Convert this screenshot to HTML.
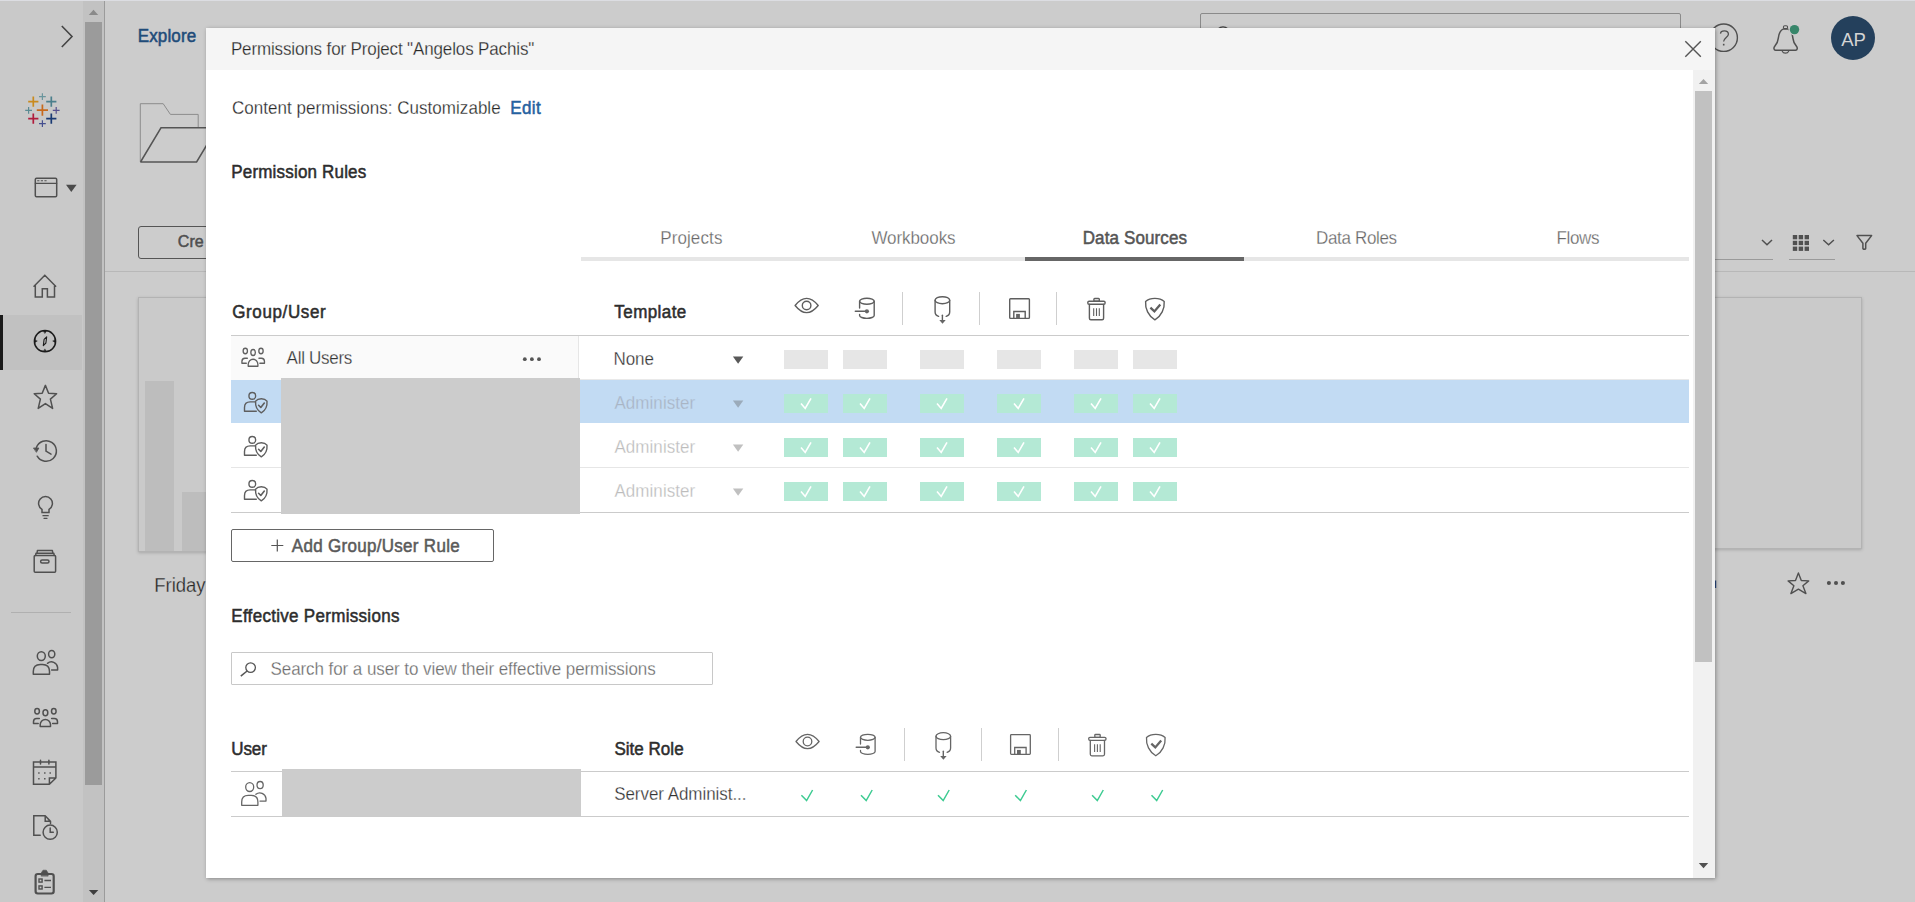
<!DOCTYPE html>
<html>
<head>
<meta charset="utf-8">
<title>Permissions</title>
<style>
*{box-sizing:border-box;margin:0;padding:0}
html,body{width:1915px;height:902px;overflow:hidden;background:#cccccc;font-family:"Liberation Sans",sans-serif;color:#333}
.abs{position:absolute}
.t{position:absolute;white-space:nowrap;line-height:1}
svg{position:absolute;left:0;top:0;overflow:visible}
#topstrip{left:0;top:0;width:1915px;height:1px;background:#dcdde2}
#side{left:0;top:1px;width:83px;height:901px;background:#c9c9c9}
#sidetrack{left:83px;top:1px;width:21px;height:901px;background:#c2c2c2}
#sideborder{left:104px;top:1px;width:1px;height:901px;background:#9b9b9b}
#sidethumb{left:85px;top:22px;width:17px;height:763px;background:#9b9b9b}
#dlg{left:206px;top:28px;width:1509px;height:850px;background:#fff;box-shadow:0.5px 1px 4px 0 rgba(0,0,0,.34);overflow:visible}
#dlgin{left:-206px;top:-28px;width:1915px;height:902px}
#dlghead{left:206px;top:28px;width:1509px;height:42px;background:#f5f5f5}
#dtrack{left:1693px;top:70px;width:22px;height:808px;background:#f1f1f1}
#dthumb{left:1695px;top:91px;width:17px;height:571px;background:#c1c1c1}
.hl{position:absolute;height:1px;background:#cbcbcb}
.box{position:absolute;width:44px;height:19px;background:#e6e6e6}
.gbox{position:absolute;width:44px;height:19px;background:#b4e9d5}
</style>
</head>
<body>
<div id="bg" class="abs" style="left:0;top:0;width:1915px;height:902px;overflow:hidden">
<div id="topstrip" class="abs"></div>
<div id="side" class="abs"></div>
<div id="sidetrack" class="abs"></div>
<div id="sideborder" class="abs"></div>
<div id="sidethumb" class="abs"></div>
<!-- selected nav item -->
<div class="abs" style="left:0;top:315px;width:82px;height:55px;background:#c1c1c1"></div>
<div class="abs" style="left:0;top:315px;width:3px;height:55px;background:#1a1a1a"></div>
<!-- sidebar divider -->
<div class="abs" style="left:11px;top:612px;width:60px;height:1px;background:#b0b0b0"></div>
<!-- search box top -->
<div class="abs" style="left:1200px;top:13px;width:481px;height:40px;border:1px solid #8a8a8a;border-radius:2px"></div>
<!-- create button -->
<div class="abs" style="left:138px;top:226px;width:200px;height:33px;border:1px solid #555;border-radius:3px"></div>
<!-- toolbar line -->
<div class="abs" style="left:105px;top:271px;width:1810px;height:1px;background:#b8b8b8"></div>
<!-- left card -->
<div class="abs" style="left:138px;top:297px;width:300px;height:255px;border:1px solid #b3b3b3;background:#cacaca;box-shadow:0 1px 3px rgba(0,0,0,.18)"></div>
<div class="abs" style="left:145px;top:381px;width:29px;height:170px;background:#bdbdbd"></div>
<div class="abs" style="left:182px;top:492px;width:29px;height:59px;background:#bdbdbd"></div>
<!-- right card -->
<div class="abs" style="left:1562px;top:297px;width:300px;height:252px;border:1px solid #b3b3b3;background:#cacaca;box-shadow:0 1px 3px rgba(0,0,0,.18)"></div>
<!-- dropdown underlines -->
<div class="abs" style="left:1600px;top:259px;width:173px;height:1px;background:#9a9a9a"></div>
<div class="abs" style="left:1789px;top:259px;width:46px;height:1px;background:#9a9a9a"></div>
<!-- avatar -->
<div class="abs" style="left:1831px;top:16px;width:44px;height:44px;border-radius:22px;background:#24405c"></div>

<svg width="1915" height="902" viewBox="0 0 1915 902" fill="none" stroke="#505050" stroke-width="1.5" stroke-linecap="round" stroke-linejoin="round">
<!-- chevron -->
<path d="M61.8 26 L72 36.5 L61.8 47" stroke-width="1.6" stroke-linecap="butt" stroke-linejoin="miter" stroke="#444"/>
<!-- sidebar scroll arrows -->
<path d="M88.8 15 L93.5 9.8 L98.2 15 Z" fill="#8a8a8a" stroke="none"/>
<path d="M88.9 890 L98.3 890 L93.6 895 Z" fill="#3f3f3f" stroke="none"/>
<!-- tableau logo -->
<g stroke-linecap="butt" stroke-width="1.7">
<path d="M42.4 104.4 V115.8 M36.8 110.1 H48" stroke="#c8691c"/>
<path d="M33.3 96.4 V106.8 M28.2 101.6 H38.4" stroke="#c98a1e"/>
<path d="M51.3 96.4 V106.8 M46.2 101.6 H56.4" stroke="#4b7f8c"/>
<path d="M33.3 113.4 V123.8 M28.2 118.6 H38.4" stroke="#b01c3c"/>
<path d="M51.3 113.4 V123.8 M46.2 118.6 H56.4" stroke="#1a3a73"/>
<g stroke-width="1.2">
<path d="M42.4 93.2 V100 M39 96.6 H45.8" stroke="#6a959c"/>
<path d="M42.4 120.2 V127 M39 123.6 H45.8" stroke="#454f8f"/>
<path d="M28.6 106.9 V113.7 M25.2 110.3 H32" stroke="#5b8b93"/>
<path d="M56.2 106.9 V113.7 M52.8 110.3 H59.6" stroke="#55508f"/>
</g>
</g>
<!-- window icon -->
<rect x="35.3" y="178.3" width="21.4" height="18.4" rx="1.2"/>
<path d="M35.3 183.3 H56.7" stroke-width="1.2"/>
<path d="M37.2 180.7 H39.4 M40.8 180.7 H43 M44.4 180.7 H46.6" stroke-width="1.1" stroke-linecap="butt"/>
<path d="M66 184.8 H76.6 L71.3 192 Z" fill="#4a4a4a" stroke="none"/>
<!-- home -->
<path d="M34 286.2 L44.8 275.2 L55.7 286.2 M35.3 285 V297 H42.3 V288.7 H47.4 V297 H54.5 V285" stroke-linejoin="miter"/>
<!-- explore compass -->
<g stroke="#1c1c1c">
<circle cx="45" cy="341.2" r="10.6"/>
<path d="M43.3 345.6 L44.1 339.4 L46.7 336.8 L45.9 343 Z" stroke-width="1.1"/>
<path d="M43.6 330.9 H46.4 L45 333.2 Z M43.6 351.5 H46.4 L45 349.2 Z M34.7 339.8 V342.6 L37 341.2 Z M55.3 339.8 V342.6 L53 341.2 Z" fill="#1c1c1c" stroke-width="0.5"/>
</g>
<!-- star -->
<path d="M45.4 385.4 L48.6 393.3 L56.6 393.8 L50.4 399.1 L52.6 408.4 L45.4 403.6 L38.2 408.4 L40.4 399.1 L34.2 393.8 L42.2 393.3 Z"/>
<!-- history -->
<path d="M36.4 447.5 A10.3 10.3 0 1 1 37.2 456.2"/>
<path d="M33.8 448 L38.9 448 L36.6 452 Z" fill="#505050" stroke-width="0.8"/>
<path d="M46 444.6 V451.2 L51 454.1"/>
<!-- bulb -->
<path d="M42 512.6 V509.4 A6.9 6.9 0 1 1 49 509.4 V512.6 Z" stroke-linejoin="miter"/>
<path d="M43 515.7 H48.2 M44 518.3 H47" stroke-width="1.3"/>
<!-- archive box -->
<rect x="34.2" y="555.6" width="21.4" height="16.6" rx="1"/>
<path d="M35.6 555.4 L36 553.2 H53.8 L54.2 555.4 M37 553 L37.4 550.6 H52.4 L52.8 553"/>
<rect x="40.6" y="560" width="8.4" height="3" rx="1.5"/>
<!-- users -->
<ellipse cx="41.3" cy="656.1" rx="4" ry="4.4"/>
<path d="M33.3 674.3 V671.4 Q33.3 664.4 40.3 664.4 H42.5 Q49.5 664.4 49.5 671.4 V674.3 Z"/>
<ellipse cx="51.7" cy="654.1" rx="3.1" ry="3.6"/>
<path d="M47.5 663.3 A6.2 6.2 0 0 1 57.6 667.4 V670.1 H51.6"/>
<!-- groups -->
<ellipse cx="37.1" cy="711.2" rx="2.3" ry="2.7"/>
<ellipse cx="45.4" cy="712.7" rx="2.4" ry="3"/>
<ellipse cx="53.8" cy="711.2" rx="2.3" ry="2.7"/>
<path d="M40.2 726.4 V724.6 A5.15 5.15 0 0 1 50.5 724.6 V726.4 Z"/>
<path d="M39.3 718.5 H36.7 Q33.5 718.5 33.5 721.7 V723.5 H38.2"/>
<path d="M51.6 718.5 H54.3 Q57.5 718.5 57.5 721.7 V723.5 H52.6"/>
<!-- calendar -->
<path d="M33.5 761.9 H55.9 V778 L49.4 784.2 H33.5 Z M33.5 767 H55.9 M49.4 784.2 V778 H55.9" stroke-linejoin="miter"/>
<path d="M40.5 760.2 V764.1 M48.9 760.2 V764.1"/>
<path d="M38.2 773 H39.6 M44.1 773 H45.5 M49.5 773 H50.9 M38.2 778.8 H39.6 M44.1 778.8 H45.5" stroke-width="1.5" stroke-linecap="butt"/>
<!-- doc clock -->
<path d="M40.2 835.2 H33.8 V815.8 H45.2 L50.5 821.4 V823.6 M45.2 815.8 V821.3 H50.5" stroke-linejoin="miter"/>
<circle cx="50.2" cy="832.2" r="7.1"/>
<path d="M50.2 828 V832.3 H53.3" stroke-linejoin="miter"/>
<!-- clipboard -->
<rect x="35.6" y="874" width="18.1" height="19.5" rx="2.2" stroke-width="2.2"/>
<path d="M41.2 875.8 V873 L43 870.2 H46.3 L48.1 873 V875.8 Z" fill="#505050" stroke-width="0.6"/>
<rect x="39" y="879" width="3.1" height="3.1" stroke-width="1.4" stroke-linejoin="miter"/>
<rect x="39" y="885.9" width="3.1" height="3.1" stroke-width="1.4" stroke-linejoin="miter"/>
<path d="M44.4 880.5 H51 M44.4 887.4 H51" stroke-width="1.3" stroke-linecap="butt"/>

<!-- folder -->
<path d="M140.3 162 V103.7 H163.2 L170.4 114.4 H198.2 V127.2" stroke="#8c8c8c" stroke-width="1" stroke-linejoin="miter" stroke-linecap="butt"/>
<path d="M140.5 162 L161 127.8 H230 M140.3 162 H196.6 L214 133" stroke="#555" stroke-width="1.5" stroke-linejoin="miter" stroke-linecap="butt"/>
<!-- top search icon hint -->
<circle cx="1223" cy="33.5" r="6.6" stroke="#444" stroke-width="1.4"/>
<!-- help -->
<circle cx="1723.7" cy="37.7" r="13.7" stroke-width="1.4"/>
<path d="M1720.5 33.6 C1720.7 31.6 1722.3 30.9 1724.3 30.9 C1727 30.9 1728.4 32.4 1728.4 34.2 C1728.4 37.2 1723.6 37.8 1723.6 41.6" stroke-width="1.3" stroke-linecap="butt"/>
<rect x="1722.9" y="43.8" width="1.6" height="1.7" fill="#505050" stroke="none"/>
<!-- bell -->
<rect x="1783.4" y="25.7" width="4.2" height="2.9" rx="1.4" stroke-width="1.1"/>
<path d="M1783.6 28.9 C1779.6 30.2 1778.7 34.4 1778.2 38.6 C1777.8 42.8 1776.2 44.8 1774.6 46.6 C1773.6 47.8 1773.7 50.3 1775.6 50.3 H1795.6 C1797.5 50.3 1797.6 47.8 1796.6 46.6 C1795 44.8 1793.4 42.8 1793 38.6 C1792.5 34.4 1791.6 30.2 1787.4 28.9 Z"/>
<path d="M1782.3 51.4 A3.3 2.6 0 0 0 1788.6 51.4" stroke-width="1.2"/>
<circle cx="1794.5" cy="29.6" r="6" fill="#cccccc" stroke="none"/>
<circle cx="1794.5" cy="29.6" r="4.7" fill="#37866a" stroke="none"/>
<!-- toolbar chevrons -->
<path d="M1762 240 L1767 244.8 L1772 240 M1823.3 240 L1828.6 244.8 L1833.9 240" stroke-width="1.5" stroke-linecap="butt" stroke-linejoin="miter"/>
<!-- grid -->
<g fill="#505050" stroke="none">
<rect x="1792.8" y="235" width="4.4" height="4.3"/><rect x="1798.7" y="235" width="4.4" height="4.3"/><rect x="1804.6" y="235" width="4.4" height="4.3"/>
<rect x="1792.8" y="240.8" width="4.4" height="4.3"/><rect x="1798.7" y="240.8" width="4.4" height="4.3"/><rect x="1804.6" y="240.8" width="4.4" height="4.3"/>
<rect x="1792.8" y="246.6" width="4.4" height="4.3"/><rect x="1798.7" y="246.6" width="4.4" height="4.3"/><rect x="1804.6" y="246.6" width="4.4" height="4.3"/>
</g>
<!-- filter -->
<path d="M1857 235.6 H1871.6 L1865.7 243.2 V248.6 Q1864.3 249.9 1862.9 248.6 V243.2 Z" stroke-width="1.5"/>
<!-- card star + dots -->
<path d="M1798.4 573 L1801.3 580.5 L1808.7 580.9 L1802.9 585.7 L1805.9 593.6 L1798.4 589.2 L1790.9 593.6 L1793.9 585.7 L1788.1 580.9 L1795.5 580.5 Z" stroke-width="1.4"/>
<g fill="#505050" stroke="none"><circle cx="1828.9" cy="583" r="2.05"/><circle cx="1836" cy="583" r="2.05"/><circle cx="1842.9" cy="583" r="2.05"/></g>
<rect x="1715" y="580.5" width="1.2" height="7.5" fill="#27467e" stroke="none"/>
</svg>

<div class="t" id="explore" style="left:137.65px;top:27.90px;font-size:17px;color:#204b79;-webkit-text-stroke:0.5px #204b79;letter-spacing:0.152px;transform:scaleY(1.06);transform-origin:0 14.00px;">Explore</div>
<div class="t" id="cre" style="left:177.85px;top:234.30px;font-size:16px;color:#4f4f4f;-webkit-text-stroke:0.5px #4f4f4f;transform:scaleY(1.06);transform-origin:0 13.00px;">Cre</div>
<div class="t" id="friday" style="left:154.20px;top:576.80px;font-size:18.5px;color:#2a2a2a;-webkit-text-stroke:0.24px #cccccc;transform:scaleY(1.06);transform-origin:0 15.00px;">Friday</div>
<div class="t" id="ap" style="left:1841.30px;top:30.70px;font-size:18.5px;color:#d4d4d4;letter-spacing:-0.139px;">AP</div>
</div>
<div id="dlg" class="abs">
<div id="dlgin" class="abs">
<div id="dlghead" class="abs"></div>
<div id="dtrack" class="abs"></div>
<div id="dthumb" class="abs"></div>
<!-- tabs line -->
<div class="abs" style="left:581px;top:257px;width:1108px;height:4px;background:#e6e6e6"></div>
<div class="abs" style="left:1025px;top:257px;width:219px;height:4px;background:#666"></div>
<!-- table 1 -->
<div class="hl" style="left:231px;top:335px;width:1458px"></div>
<div class="abs" style="left:231px;top:336px;width:348px;height:44px;background:#fafafa;border-right:1px solid #e6e6e6"></div>
<div class="abs" style="left:231px;top:380px;width:1458px;height:43px;background:#c2dbf3"></div>
<div class="hl" style="left:231px;top:467px;width:1458px;background:#e6e6e6"></div>
<div class="hl" style="left:579px;top:379px;width:1110px;background:#e9e9e9"></div>
<div class="hl" style="left:231px;top:512px;width:1458px"></div>
<div class="abs" style="left:281px;top:378px;width:299px;height:136px;background:#cccccc"></div>
<!-- add button -->
<div class="abs" style="left:231px;top:529px;width:263px;height:33px;border:1px solid #666;border-radius:2px"></div>
<!-- search -->
<div class="abs" style="left:231px;top:652px;width:482px;height:33px;border:1px solid #c8c8c8;border-radius:1px"></div>
<!-- table 2 -->
<div class="hl" style="left:231px;top:771px;width:1458px"></div>
<div class="hl" style="left:231px;top:816px;width:1458px"></div>
<div class="abs" style="left:282px;top:769px;width:299px;height:47px;background:#cccccc"></div>
<div class="box" style="left:784px;top:350px"></div>
<div class="box" style="left:843px;top:350px"></div>
<div class="box" style="left:920px;top:350px"></div>
<div class="box" style="left:997px;top:350px"></div>
<div class="box" style="left:1074px;top:350px"></div>
<div class="box" style="left:1133px;top:350px"></div>
<div class="gbox" style="left:784px;top:394px"></div>
<div class="gbox" style="left:843px;top:394px"></div>
<div class="gbox" style="left:920px;top:394px"></div>
<div class="gbox" style="left:997px;top:394px"></div>
<div class="gbox" style="left:1074px;top:394px"></div>
<div class="gbox" style="left:1133px;top:394px"></div>
<div class="gbox" style="left:784px;top:438px"></div>
<div class="gbox" style="left:843px;top:438px"></div>
<div class="gbox" style="left:920px;top:438px"></div>
<div class="gbox" style="left:997px;top:438px"></div>
<div class="gbox" style="left:1074px;top:438px"></div>
<div class="gbox" style="left:1133px;top:438px"></div>
<div class="gbox" style="left:784px;top:482px"></div>
<div class="gbox" style="left:843px;top:482px"></div>
<div class="gbox" style="left:920px;top:482px"></div>
<div class="gbox" style="left:997px;top:482px"></div>
<div class="gbox" style="left:1074px;top:482px"></div>
<div class="gbox" style="left:1133px;top:482px"></div>
<svg width="1915" height="902" viewBox="0 0 1915 902" fill="none" stroke="#666" stroke-width="1.3" stroke-linecap="round" stroke-linejoin="round">
<path d="M1685.3 41.3 L1700.8 56.8 M1700.8 41.3 L1685.3 56.8" stroke="#555" stroke-width="1.4" stroke-linecap="butt"/>
<path d="M1698.8 84 L1703.5 79 L1708.2 84 Z" fill="#a3a3a3" stroke="none"/>
<path d="M1698.8 863.1 H1708.2 L1703.5 868.3 Z" fill="#505050" stroke="none"/>
<g transform="translate(0 0)" stroke="#5e5e5e" stroke-width="1.4"><path d="M795.1 305.5 Q806.6 291.3 818.2 305.5 Q806.6 319.7 795.1 305.5 Z"/><circle cx="806.6" cy="305.5" r="4.3"/><ellipse cx="866.9" cy="301.3" rx="7.3" ry="3"/><path d="M859.6 301.3 V308 M859.6 314.4 V315.4 A7.3 3 0 0 0 874.2 315.4 V301.3"/><path d="M855.3 311.3 H866.9" stroke-width="1.4"/><circle cx="866.9" cy="311.3" r="2.1" fill="#666" stroke="none"/><ellipse cx="942.4" cy="300.2" rx="7.3" ry="3.5"/><path d="M935.1 300.2 V312 Q935.1 315.3 938.6 316.3 M949.7 300.2 V312 Q949.7 315.3 946.2 316.3"/><path d="M942.4 315.2 V320.4" stroke-width="1.4"/><path d="M939.3 320 H945.7 L942.5 323.8 Z" fill="#666" stroke="none"/><rect x="1009.7" y="298.7" width="19.7" height="19.7" rx="0.8"/><path d="M1013.8 318.4 V311.5 H1025.2 V318.4" stroke-linejoin="miter"/><rect x="1016.1" y="313.9" width="3.8" height="4.6" fill="#666" stroke="none"/><rect x="1093.9" y="298.5" width="5.4" height="2.8" rx="0.8"/><rect x="1087.8" y="301.3" width="17.3" height="3" rx="1.3"/><path d="M1089.4 304.4 V318.3 Q1089.4 319.8 1090.9 319.8 H1102.1 Q1103.6 319.8 1103.6 318.3 V304.4"/><path d="M1093.7 308.2 V316 M1096.5 308.2 V316 M1099.3 308.2 V316" stroke-width="1.1" stroke-linecap="butt"/><path d="M1154.9 298.4 C1151.2 298.4 1147.6 299.7 1145.6 301.5 C1145 308.5 1148.4 316 1154.9 319.8 C1161.4 316 1164.8 308.5 1164.2 301.5 C1162.2 299.7 1158.6 298.4 1154.9 298.4 Z"/><path d="M1150.4 307.7 L1154.4 311.4 L1160.3 304.5" stroke-width="2.3" stroke-linecap="butt" stroke-linejoin="miter"/></g><path d="M902.5 292 V325" stroke="#cfcfcf" stroke-width="1" stroke-linecap="butt"/><path d="M979.5 292 V325" stroke="#cfcfcf" stroke-width="1" stroke-linecap="butt"/><path d="M1056.5 292 V325" stroke="#cfcfcf" stroke-width="1" stroke-linecap="butt"/>
<g transform="translate(0.9 436)"><path d="M795.1 305.5 Q806.6 291.3 818.2 305.5 Q806.6 319.7 795.1 305.5 Z"/><circle cx="806.6" cy="305.5" r="4.3"/><ellipse cx="866.9" cy="301.3" rx="7.3" ry="3"/><path d="M859.6 301.3 V308 M859.6 314.4 V315.4 A7.3 3 0 0 0 874.2 315.4 V301.3"/><path d="M855.3 311.3 H866.9" stroke-width="1.4"/><circle cx="866.9" cy="311.3" r="2.1" fill="#666" stroke="none"/><ellipse cx="942.4" cy="300.2" rx="7.3" ry="3.5"/><path d="M935.1 300.2 V312 Q935.1 315.3 938.6 316.3 M949.7 300.2 V312 Q949.7 315.3 946.2 316.3"/><path d="M942.4 315.2 V320.4" stroke-width="1.4"/><path d="M939.3 320 H945.7 L942.5 323.8 Z" fill="#666" stroke="none"/><rect x="1009.7" y="298.7" width="19.7" height="19.7" rx="0.8"/><path d="M1013.8 318.4 V311.5 H1025.2 V318.4" stroke-linejoin="miter"/><rect x="1016.1" y="313.9" width="3.8" height="4.6" fill="#666" stroke="none"/><rect x="1093.9" y="298.5" width="5.4" height="2.8" rx="0.8"/><rect x="1087.8" y="301.3" width="17.3" height="3" rx="1.3"/><path d="M1089.4 304.4 V318.3 Q1089.4 319.8 1090.9 319.8 H1102.1 Q1103.6 319.8 1103.6 318.3 V304.4"/><path d="M1093.7 308.2 V316 M1096.5 308.2 V316 M1099.3 308.2 V316" stroke-width="1.1" stroke-linecap="butt"/><path d="M1154.9 298.4 C1151.2 298.4 1147.6 299.7 1145.6 301.5 C1145 308.5 1148.4 316 1154.9 319.8 C1161.4 316 1164.8 308.5 1164.2 301.5 C1162.2 299.7 1158.6 298.4 1154.9 298.4 Z"/><path d="M1150.4 307.7 L1154.4 311.4 L1160.3 304.5" stroke-width="2.3" stroke-linecap="butt" stroke-linejoin="miter"/></g><path d="M904.5 728 V761" stroke="#cfcfcf" stroke-width="1" stroke-linecap="butt"/><path d="M981.5 728 V761" stroke="#cfcfcf" stroke-width="1" stroke-linecap="butt"/><path d="M1058.5 728 V761" stroke="#cfcfcf" stroke-width="1" stroke-linecap="butt"/>
<g transform="translate(253.1 -360.2) scale(0.94 1) translate(-45.4 0)" stroke-width="1.4" stroke="#606060"><ellipse cx="37.1" cy="711.2" rx="2.3" ry="2.7"/><ellipse cx="45.4" cy="712.7" rx="2.4" ry="3"/><ellipse cx="53.8" cy="711.2" rx="2.3" ry="2.7"/><path d="M40.2 726.4 V724.6 A5.15 5.15 0 0 1 50.5 724.6 V726.4 Z"/><path d="M39.3 718.5 H36.7 Q33.5 718.5 33.5 721.7 V723.5 H38.2"/><path d="M51.6 718.5 H54.3 Q57.5 718.5 57.5 721.7 V723.5 H52.6"/></g>
<g transform="translate(0 0)" stroke="#5e5e5e" stroke-width="1.4"><circle cx="252.3" cy="395.9" r="3.35"/><path d="M256.3 411.2 H244.5 V407.6 Q244.5 401.9 250.2 401.9 H255 "/><path d="M261.3 398.7 C258.8 398.7 256.7 399.7 255.6 401.1 C255.2 406 257.2 410.4 261.3 412.8 C265.4 410.4 267.4 406 267 401.1 C265.9 399.7 263.8 398.7 261.3 398.7 Z"/><path d="M258.6 405.3 L260.8 407.5 L264.3 403.1" stroke-width="1.6"/></g>
<g transform="translate(0 44)" stroke="#5e5e5e" stroke-width="1.4"><circle cx="252.3" cy="395.9" r="3.35"/><path d="M256.3 411.2 H244.5 V407.6 Q244.5 401.9 250.2 401.9 H255 "/><path d="M261.3 398.7 C258.8 398.7 256.7 399.7 255.6 401.1 C255.2 406 257.2 410.4 261.3 412.8 C265.4 410.4 267.4 406 267 401.1 C265.9 399.7 263.8 398.7 261.3 398.7 Z"/><path d="M258.6 405.3 L260.8 407.5 L264.3 403.1" stroke-width="1.6"/></g>
<g transform="translate(0 88)" stroke="#5e5e5e" stroke-width="1.4"><circle cx="252.3" cy="395.9" r="3.35"/><path d="M256.3 411.2 H244.5 V407.6 Q244.5 401.9 250.2 401.9 H255 "/><path d="M261.3 398.7 C258.8 398.7 256.7 399.7 255.6 401.1 C255.2 406 257.2 410.4 261.3 412.8 C265.4 410.4 267.4 406 267 401.1 C265.9 399.7 263.8 398.7 261.3 398.7 Z"/><path d="M258.6 405.3 L260.8 407.5 L264.3 403.1" stroke-width="1.6"/></g>
<g transform="translate(208.4 131)" stroke-width="1.3"><ellipse cx="41.3" cy="656.1" rx="4" ry="4.4"/><path d="M33.3 674.3 V671 Q33.3 664.4 39.9 664.4 H42.9 Q49.5 664.4 49.5 671 V674.3 Z"/><ellipse cx="51.7" cy="654.1" rx="3.1" ry="3.6"/><path d="M47.5 663.3 A6.2 6.2 0 0 1 57.6 667.4 V670.1 H51.6"/></g>
<g fill="#555" stroke="none"><circle cx="524.8" cy="359.2" r="1.9"/><circle cx="531.9" cy="359.2" r="1.9"/><circle cx="539" cy="359.2" r="1.9"/></g>
<path d="M732.9 356.6 H743.3 L738.1 363.8 Z" fill="#585858" stroke="none"/>
<path d="M732.9 400.6 H743.3 L738.1 407.8 Z" fill="#9babba" stroke="none"/>
<path d="M732.9 444.6 H743.3 L738.1 451.8 Z" fill="#c0c0c0" stroke="none"/>
<path d="M732.9 488.6 H743.3 L738.1 495.8 Z" fill="#c0c0c0" stroke="none"/>
<path d="M801 403.4 L805.2 408.4 L811 398.3 M860 403.4 L864.2 408.4 L870 398.3 M937 403.4 L941.2 408.4 L947 398.3 M1014 403.4 L1018.2 408.4 L1024 398.3 M1091 403.4 L1095.2 408.4 L1101 398.3 M1150 403.4 L1154.2 408.4 L1160 398.3 M801 447.4 L805.2 452.4 L811 442.3 M860 447.4 L864.2 452.4 L870 442.3 M937 447.4 L941.2 452.4 L947 442.3 M1014 447.4 L1018.2 452.4 L1024 442.3 M1091 447.4 L1095.2 452.4 L1101 442.3 M1150 447.4 L1154.2 452.4 L1160 442.3 M801 491.4 L805.2 496.4 L811 486.3 M860 491.4 L864.2 496.4 L870 486.3 M937 491.4 L941.2 496.4 L947 486.3 M1014 491.4 L1018.2 496.4 L1024 486.3 M1091 491.4 L1095.2 496.4 L1101 486.3 M1150 491.4 L1154.2 496.4 L1160 486.3 " stroke="#fff" stroke-width="1.6" stroke-linecap="butt" stroke-linejoin="miter"/>
<path d="M801.4 795.2 L806.6 800.6 L812.6 790 M861.0 795.2 L866.2 800.6 L872.2 790 M938.0 795.2 L943.2 800.6 L949.2 790 M1015.2 795.2 L1020.4000000000001 800.6 L1026.4 790 M1092.1 795.2 L1097.3 800.6 L1103.3 790 M1151.5 795.2 L1156.7 800.6 L1162.7 790 " stroke="#3ecb92" stroke-width="1.5" stroke-linecap="butt" stroke-linejoin="miter"/>
<path d="M277.3 539.6 V551.5 M271.3 545.5 H283.3" stroke="#555" stroke-width="1.2" stroke-linecap="butt"/>
<circle cx="250.6" cy="667.6" r="4.8" stroke="#555" stroke-width="1.3"/><path d="M247.1 671 L240.8 676.2" stroke="#555" stroke-width="1.5" stroke-linecap="butt"/>
</svg>

<div class="t" id="title" style="left:230.90px;top:41.00px;font-size:17px;color:#262626;-webkit-text-stroke:0.24px #f5f5f5;letter-spacing:-0.136px;transform:scaleY(1.06);transform-origin:0 14.00px;">Permissions for Project &quot;Angelos Pachis&quot;</div>
<div class="t" id="cp" style="left:232.00px;top:100.00px;font-size:17px;color:#262626;-webkit-text-stroke:0.24px #fff;letter-spacing:0.039px;transform:scaleY(1.06);transform-origin:0 14.00px;">Content permissions: Customizable</div>
<div class="t" id="edit" style="left:510.25px;top:100.00px;font-size:17px;color:#2561a0;-webkit-text-stroke:0.5px #2561a0;letter-spacing:0.377px;transform:scaleY(1.06);transform-origin:0 14.00px;">Edit</div>
<div class="t" id="pr" style="left:231.25px;top:164.20px;font-size:17px;color:#2d2d2d;-webkit-text-stroke:0.5px #2d2d2d;letter-spacing:0.182px;transform:scaleY(1.06);transform-origin:0 14.00px;">Permission Rules</div>
<div class="t" id="tab1" style="left:660.20px;top:229.80px;font-size:17px;color:#666;-webkit-text-stroke:0.24px #fff;letter-spacing:0.113px;transform:scaleY(1.06);transform-origin:0 14.00px;">Projects</div>
<div class="t" id="tab2" style="left:871.40px;top:229.80px;font-size:17px;color:#666;-webkit-text-stroke:0.24px #fff;letter-spacing:-0.065px;transform:scaleY(1.06);transform-origin:0 14.00px;">Workbooks</div>
<div class="t" id="tab3" style="left:1082.65px;top:229.80px;font-size:17px;color:#555;-webkit-text-stroke:0.5px #555;letter-spacing:0.128px;transform:scaleY(1.06);transform-origin:0 14.00px;">Data Sources</div>
<div class="t" id="tab4" style="left:1316.00px;top:229.80px;font-size:17px;color:#666;-webkit-text-stroke:0.24px #fff;letter-spacing:-0.333px;transform:scaleY(1.06);transform-origin:0 14.00px;">Data Roles</div>
<div class="t" id="tab5" style="left:1556.40px;top:229.80px;font-size:17px;color:#666;-webkit-text-stroke:0.24px #fff;letter-spacing:-0.298px;transform:scaleY(1.06);transform-origin:0 14.00px;">Flows</div>
<div class="t" id="gu" style="left:232.25px;top:304.40px;font-size:17px;color:#2d2d2d;-webkit-text-stroke:0.5px #2d2d2d;letter-spacing:0.611px;transform:scaleY(1.06);transform-origin:0 14.00px;">Group/User</div>
<div class="t" id="tpl" style="left:614.35px;top:304.40px;font-size:17px;color:#2d2d2d;-webkit-text-stroke:0.5px #2d2d2d;letter-spacing:0.425px;transform:scaleY(1.06);transform-origin:0 14.00px;">Template</div>
<div class="t" id="allu" style="left:286.60px;top:350.20px;font-size:17px;color:#333;-webkit-text-stroke:0.24px #fafafa;letter-spacing:-0.289px;transform:scaleY(1.06);transform-origin:0 14.00px;">All Users</div>
<div class="t" id="none" style="left:613.40px;top:351.40px;font-size:17px;color:#333;-webkit-text-stroke:0.24px #fff;transform:scaleY(1.06);transform-origin:0 14.00px;">None</div>
<div class="t" id="adm1" style="left:614.40px;top:395.40px;font-size:17px;color:#a9b5c4;-webkit-text-stroke:0.24px #c2dbf3;letter-spacing:0.062px;transform:scaleY(1.06);transform-origin:0 14.00px;">Administer</div>
<div class="t" id="adm2" style="left:614.40px;top:439.40px;font-size:17px;color:#bcbcbc;-webkit-text-stroke:0.24px #fff;letter-spacing:0.062px;transform:scaleY(1.06);transform-origin:0 14.00px;">Administer</div>
<div class="t" id="adm3" style="left:614.40px;top:483.40px;font-size:17px;color:#bcbcbc;-webkit-text-stroke:0.24px #fff;letter-spacing:0.062px;transform:scaleY(1.06);transform-origin:0 14.00px;">Administer</div>
<div class="t" id="add" style="left:291.75px;top:537.90px;font-size:17px;color:#5a5a5a;-webkit-text-stroke:0.5px #5a5a5a;letter-spacing:0.302px;transform:scaleY(1.06);transform-origin:0 14.00px;">Add Group/User Rule</div>
<div class="t" id="ep" style="left:231.25px;top:607.80px;font-size:17px;color:#2d2d2d;-webkit-text-stroke:0.5px #2d2d2d;letter-spacing:0.301px;transform:scaleY(1.06);transform-origin:0 14.00px;">Effective Permissions</div>
<div class="t" id="ph" style="left:270.50px;top:660.70px;font-size:17px;color:#6a6a6a;-webkit-text-stroke:0.24px #fff;letter-spacing:-0.072px;transform:scaleY(1.06);transform-origin:0 14.00px;">Search for a user to view their effective permissions</div>
<div class="t" id="user" style="left:231.25px;top:741.00px;font-size:17px;color:#2d2d2d;-webkit-text-stroke:0.5px #2d2d2d;letter-spacing:-0.110px;transform:scaleY(1.06);transform-origin:0 14.00px;">User</div>
<div class="t" id="sr" style="left:614.45px;top:741.00px;font-size:17px;color:#2d2d2d;-webkit-text-stroke:0.5px #2d2d2d;letter-spacing:0.022px;transform:scaleY(1.06);transform-origin:0 14.00px;">Site Role</div>
<div class="t" id="sa" style="left:614.20px;top:786.30px;font-size:17px;color:#333;-webkit-text-stroke:0.24px #fff;letter-spacing:-0.054px;transform:scaleY(1.06);transform-origin:0 14.00px;">Server Administ...</div>
</div>
</div>
</body>
</html>
